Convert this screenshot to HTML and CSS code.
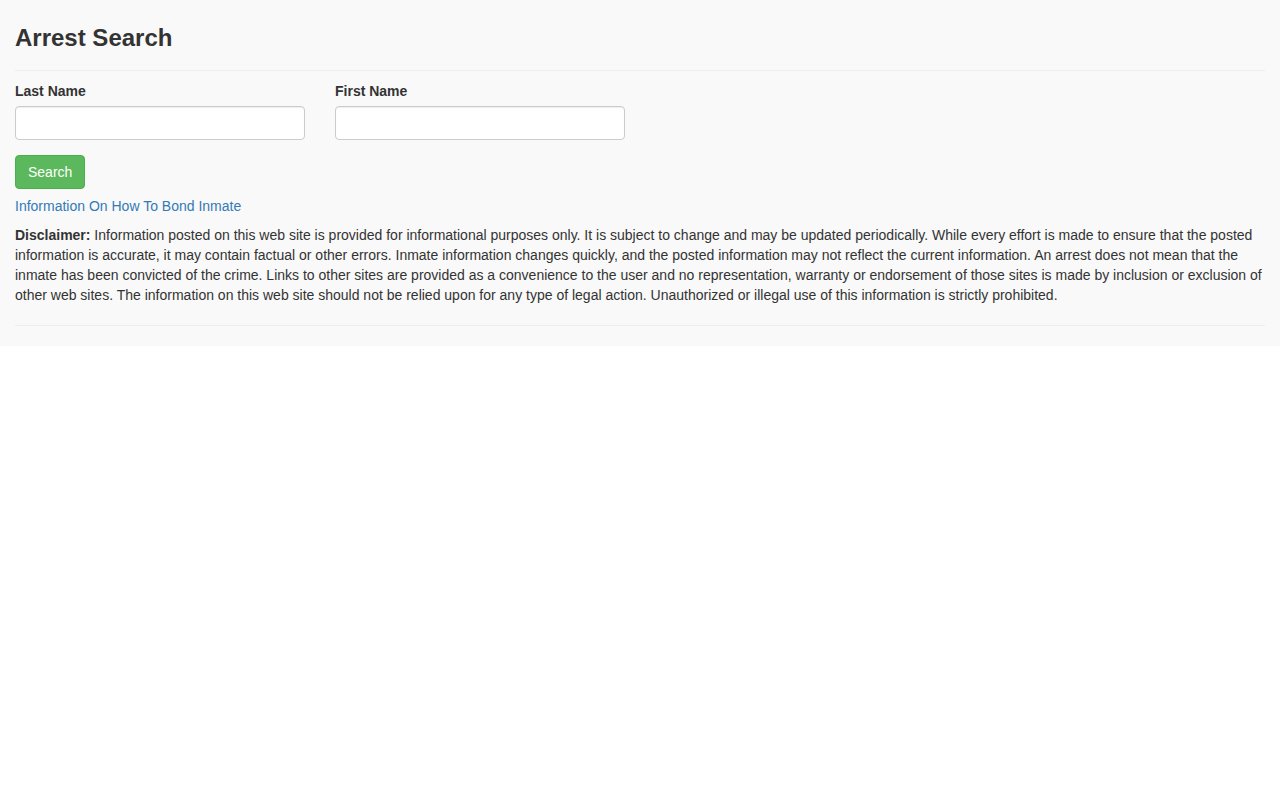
FILE: index.html
```html
<!DOCTYPE html>
<html lang="en">
<head>
<meta charset="utf-8">
<title>Arrest Search</title>
<link rel="stylesheet" href="styles.css">
</head>
<body>
<div class="panel">
  <h3 class="title">Arrest Search</h3>
  <hr class="rule">
  <form class="search-form" onsubmit="return false;">
    <div class="fields">
      <div class="field">
        <label class="field-label" for="last">Last Name</label>
        <input class="field-input" id="last" type="text">
      </div>
      <div class="field">
        <label class="field-label" for="first">First Name</label>
        <input class="field-input" id="first" type="text">
      </div>
    </div>
    <div class="actions">
      <button class="btn-search" type="submit">Search</button>
    </div>
  </form>
  <div class="bond"><a class="bond-link" href="#">Information On How To Bond Inmate</a></div>
  <p class="disclaimer"><strong>Disclaimer:</strong> Information posted on this web site is provided for informational purposes only. It is subject to change and may be updated periodically. While every effort is made to ensure that the posted information is accurate, it may contain factual or other errors. Inmate information changes quickly, and the posted information may not reflect the current information. An arrest does not mean that the inmate has been convicted of the crime. Links to other sites are provided as a convenience to the user and no representation, warranty or endorsement of those sites is made by inclusion or exclusion of other web sites. The information on this web site should not be relied upon for any type of legal action. Unauthorized or illegal use of this information is strictly prohibited.</p>
  <hr class="rule rule-bottom">
</div>
</body>
</html>
```
FILE: styles.css
```css
html, body {
  margin: 0;
  padding: 0;
  background: #fff;
}
body {
  font-family: "Liberation Sans", Arial, sans-serif;
  font-size: 14px;
  line-height: 20px;
  color: #333;
}
.panel {
  background: #f9f9f9;
  padding: 25px 15px 0;
  overflow: hidden;
}
.title {
  margin: 0 0 10px;
  font-size: 24px;
  line-height: 26.4px;
  font-weight: bold;
  color: #333;
}
.rule {
  border: 0;
  border-top: 1px solid #eee;
  margin: 19px 0 10px;
  height: 0;
}
.rule-bottom {
  margin: 20px 0 20px;
}
.search-form {
  margin: 0;
}
.fields {
  display: grid;
  grid-template-columns: 290px 290px;
  column-gap: 30px;
  margin-bottom: 15px;
}
.field {
  display: flex;
  flex-direction: column;
}
.field-label {
  font-weight: bold;
  margin-bottom: 5px;
  line-height: 20px;
}
.field-input {
  box-sizing: border-box;
  width: 290px;
  height: 34px;
  padding: 6px 12px;
  font: inherit;
  color: #555;
  background: #fff;
  border: 1px solid #ccc;
  border-radius: 4px;
  box-shadow: inset 0 1px 1px rgba(0,0,0,.075);
  margin: 0;
}
.actions {
  margin-bottom: 7px;
}
.btn-search {
  box-sizing: border-box;
  display: inline-block;
  height: 34px;
  padding: 6px 12px;
  font-family: inherit;
  font-size: 14px;
  line-height: 20px;
  color: #fff;
  background: #5cb85c;
  border: 1px solid #4cae4c;
  border-radius: 4px;
  cursor: pointer;
  margin: 0;
}
.bond {
  line-height: 20px;
}
.bond-link {
  color: #337ab7;
  text-decoration: none;
}
.disclaimer {
  margin: 9px 0 0;
}
.disclaimer strong {
  font-weight: bold;
}
```
